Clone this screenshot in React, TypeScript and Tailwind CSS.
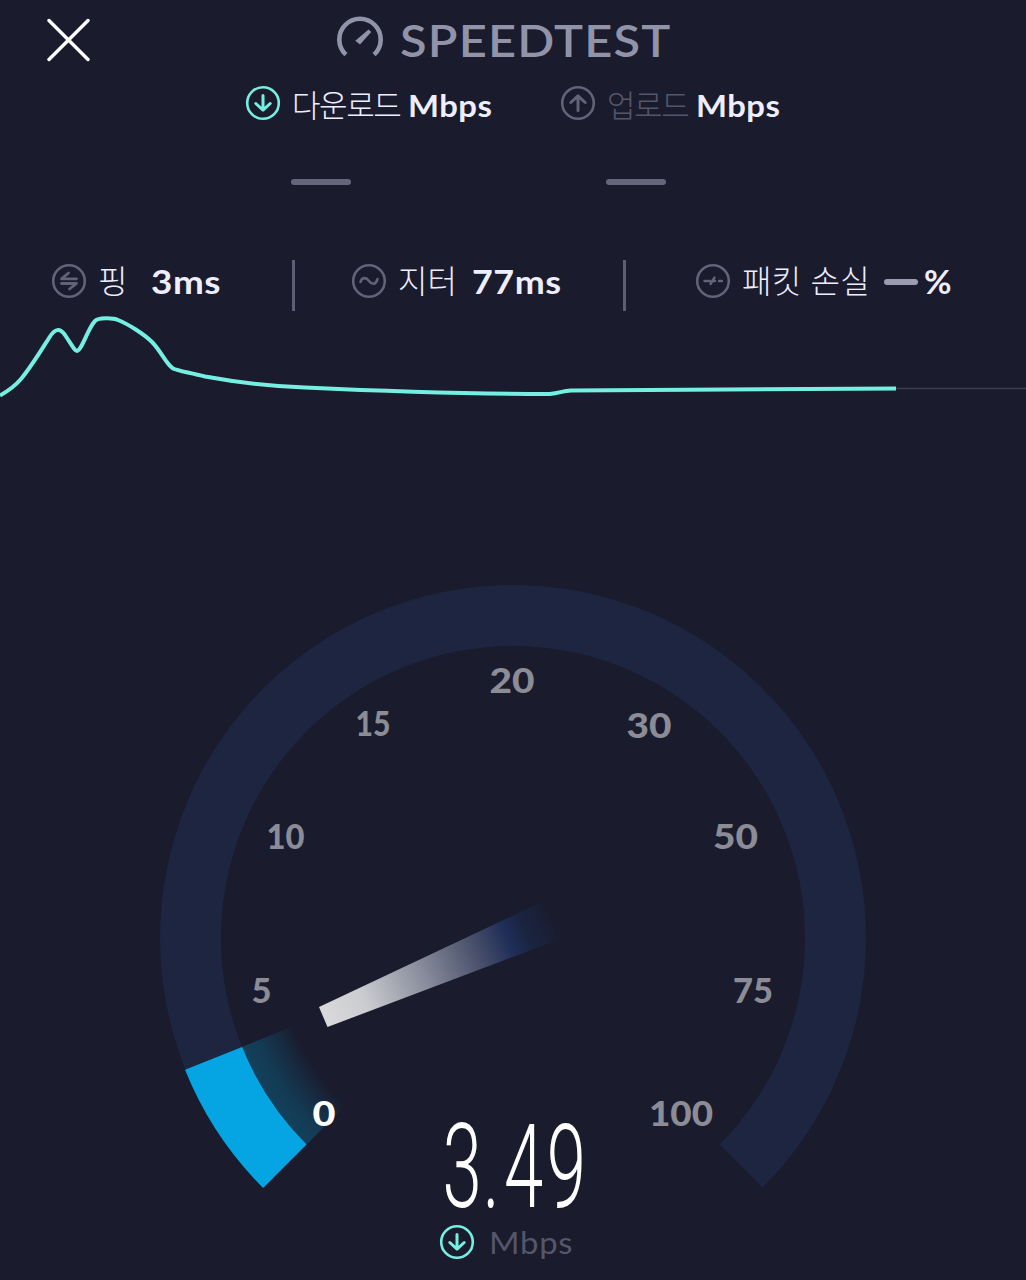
import React from "react";

const CX = 513;
const CY = 518;

function polar(r: number, deg: number) {
  const a = (deg * Math.PI) / 180;
  return `${(CX + r * Math.cos(a)).toFixed(2)} ${(CY + r * Math.sin(a)).toFixed(2)}`;
}

// Ring segment between two angles, measured clockwise from the positive x axis.
function band(outer: number, inner: number, from: number, to: number) {
  const large = to - from > 180 ? 1 : 0;
  return `M${polar(outer, from)}A${outer} ${outer} 0 ${large} 1 ${polar(outer, to)}L${polar(inner, to)}A${inner} ${inner} 0 ${large} 0 ${polar(inner, from)}Z`;
}

function RoundIcon({ children, className }: { children: React.ReactNode; className: string }) {
  return (
    <svg viewBox="0 0 36 36" fill="none" stroke="currentColor" strokeWidth="2.6" strokeLinecap="round" strokeLinejoin="round" className={`size-9 shrink-0 ${className}`}>
      <circle cx="18" cy="18" r="15.8" />
      {children}
    </svg>
  );
}

const DownArrow = () => <path d="M18 10.5V25M10.8 18.5L18 25.2L25.2 18.5" strokeWidth="3" />;
const UpArrow = () => <path d="M18 25.5V11M10.8 17.5L18 10.8L25.2 17.5" strokeWidth="3" />;

const ticks = [
  { label: "0", x: 324, y: 706, w: 23, active: true },
  { label: "5", x: 261.5, y: 583, w: 20 },
  { label: "10", x: 285.5, y: 429, w: 38 },
  { label: "15", x: 373, y: 316, w: 35 },
  { label: "20", x: 512, y: 273, w: 45 },
  { label: "30", x: 649, y: 318, w: 45 },
  { label: "50", x: 735.5, y: 429, w: 45 },
  { label: "75", x: 753, y: 583, w: 40 },
  { label: "100", x: 681, y: 706, w: 64 },
];

function Gauge() {
  return (
    <svg viewBox="0 0 1026 860" className="col-start-1 row-start-1 h-[860px] w-[1026px]">
      <defs>
        <radialGradient id="glow" gradientUnits="userSpaceOnUse" cx={CX} cy={CY} r="292">
          <stop offset="0.81" stopColor="#10506f" stopOpacity="0" />
          <stop offset="0.87" stopColor="#10506f" stopOpacity="0.3" />
          <stop offset="0.94" stopColor="#10506f" stopOpacity="0.6" />
          <stop offset="1" stopColor="#10506f" stopOpacity="0.7" />
        </radialGradient>
        <linearGradient id="needle" gradientUnits="userSpaceOnUse" x1="323" y1="597" x2="552" y2="502">
          <stop offset="0" stopColor="#dadadb" />
          <stop offset="0.18" stopColor="#cbccd0" />
          <stop offset="0.45" stopColor="#858999" />
          <stop offset="0.66" stopColor="#4b526c" />
          <stop offset="0.81" stopColor="#1f2e58" />
          <stop offset="0.89" stopColor="#1a2440" />
          <stop offset="1" stopColor="#1a1d31" />
        </linearGradient>
      </defs>
      <path d={band(353, 292, 135, 405)} fill="#1d2540" />
      <path d={band(293, 236, 135, 158.1)} fill="url(#glow)" />
      <path d={band(353.5, 292, 135, 158.1)} fill="#04a5e2" />
      <path d="M319 587L327.5 607L558 520L542 482Z" fill="url(#needle)" />
      {ticks.map((t) => (
        <text key={t.label} x={t.x} y={t.y} textAnchor="middle" textLength={t.w} lengthAdjust="spacingAndGlyphs" fill={t.active ? "#ffffff" : "#8b8c96"} className="font-['Lato'] text-[34px] font-black">
          {t.label}
        </text>
      ))}
    </svg>
  );
}

export default function App() {
  return (
    <main className="flex h-[1280px] w-[1026px] flex-col overflow-hidden bg-[#1a1b2d] font-['Lato','Noto_Sans_CJK_KR',sans-serif] text-[#eeeeff]">
      <header className="flex h-20 items-center pl-[47px]">
        <svg viewBox="0 0 44 44" className="size-11" stroke="#fff" strokeWidth="3.4" strokeLinecap="round">
          <path d="M2 2.5L41 41.5M41 2.5L2 41.5" />
        </svg>
        <div className="ml-[245px] flex items-center text-[#9193a9]">
          <svg viewBox="0 0 48 40" className="h-10 w-12 overflow-visible" fill="none">
            <path d="M9.9 34.6A20.7 20.7 0 1 1 38.1 34.6" stroke="currentColor" strokeWidth="4.6" />
            <path d="M32.5 9.5L35.3 12L24 24.5L19.3 20.8Z" fill="currentColor" />
          </svg>
          <h1 className="ml-4 w-[270px] origin-left scale-x-[1.083] text-[45px] leading-none font-semibold tracking-[1.1px] whitespace-nowrap">SPEEDTEST</h1>
        </div>
      </header>

      <section className="flex h-[50px] items-center pl-[245px] text-[31px] leading-[50px] whitespace-nowrap">
        <RoundIcon className="-mt-1 text-[#76efe3]"><DownArrow /></RoundIcon>
        <span className="ml-[11px] w-[116px] font-light tracking-[-1.4px]">다운로드</span>
        <span className="w-[152px] origin-left scale-x-[1.06] font-bold tracking-[0.4px]">Mbps</span>
        <RoundIcon className="-mt-1 text-[#626376]"><UpArrow /></RoundIcon>
        <span className="ml-[11px] w-[89px] font-light tracking-[-1.4px] text-[#55566a]">업로드</span>
        <span className="origin-left scale-x-[1.06] font-bold tracking-[0.4px]">Mbps</span>
      </section>

      <section className="flex h-[106px] gap-[255px] pt-[49px] pl-[291px]">
        <div className="h-1.5 w-[60px] rounded-full bg-[#656679]" />
        <div className="h-1.5 w-[60px] rounded-full bg-[#656679]" />
      </section>

      <section className="flex h-[76px] items-center pt-[18px] pl-[51px] text-[32px] leading-[46px] whitespace-nowrap">
        <RoundIcon className="-mt-1 text-[#626376]">
          <path d="M10.5 15.8H25.5M10.5 15.8L17.5 10M10.5 20.5H25.5L18.5 26" strokeWidth="2.8" />
        </RoundIcon>
        <span className="-mt-1 ml-[11px] w-[53px] font-light">핑</span>
        <span className="-mt-0.5 w-[141px] origin-left scale-x-[1.15] font-bold tracking-[0.5px]">3ms</span>
        <div className="mt-1 h-[51px] w-[3px] bg-[#5d5e71]" />
        <RoundIcon className="-mt-1 ml-[56px] text-[#626376]">
          <path d="M9.5 19C11 14 15 14 18 18S25 22 26.5 16" />
        </RoundIcon>
        <span className="-mt-1 ml-[11px] w-[74px] font-light">지터</span>
        <span className="-mt-0.5 w-[151px] origin-left scale-x-[1.12] font-bold tracking-[0.5px]">77ms</span>
        <div className="mt-1 h-[51px] w-[3px] bg-[#5d5e71]" />
        <RoundIcon className="-mt-1 ml-[69px] text-[#626376]">
          <path d="M9.5 18H15M15.5 21L19.5 14.5M19 18H20M24 18H27" strokeWidth="2.4" />
        </RoundIcon>
        <span className="-mt-1 ml-[11px] w-[142px] font-light tracking-[0.3px]">패킷 손실</span>
        <div className="-mt-[3px] h-1.5 w-[34px] rounded-full bg-[#9b9caf]" />
        <span className="-mt-0.5 ml-[6px] origin-left scale-x-[1.05] font-bold">%</span>
      </section>

      <svg viewBox="0 312 1026 108" className="h-[108px] w-[1026px] shrink-0" fill="none">
        <path d="M895 388.5H1026" stroke="#3d3e50" strokeWidth="1.5" />
        <path d="M0 395.5C8 391 15 386 21 379C31 367 42 349 49 338C55 328 60 328 65 335C73 347 75 351 77 351C82 350 88 328 95 321C98 317.5 113 317.5 118 320C128 324 144 334 152 342C161 351 166 364 173 368.5C178 371 190 372.5 205 376.5C235 382 265 386 305 387.5C380 391 480 394 550 394C560 393 562 391 571 390.5L896 388.5" stroke="#76efe3" strokeWidth="4" strokeLinejoin="round" />
      </svg>

      <section className="grid h-[860px] grid-cols-1">
        <Gauge />
        <div className="col-start-1 row-start-1 flex w-[146px] flex-col self-end justify-self-center pb-5">
          <svg viewBox="0 0 146 100" className="h-[100px] w-[146px] overflow-visible">
            <text x="4.3 70 105 175" y="83" transform="scale(0.61 1)" fill="#fff" className="font-['Roboto'] text-[116px] font-light">3.49</text>
          </svg>
          <div className="flex items-center text-[31px] leading-9 whitespace-nowrap text-[#555669]">
            <RoundIcon className="-ml-[1px] text-[#76efe3]"><DownArrow /></RoundIcon>
            <span className="ml-[14px] origin-left scale-x-[1.06] tracking-[0.7px]">Mbps</span>
          </div>
        </div>
      </section>
    </main>
  );
}
